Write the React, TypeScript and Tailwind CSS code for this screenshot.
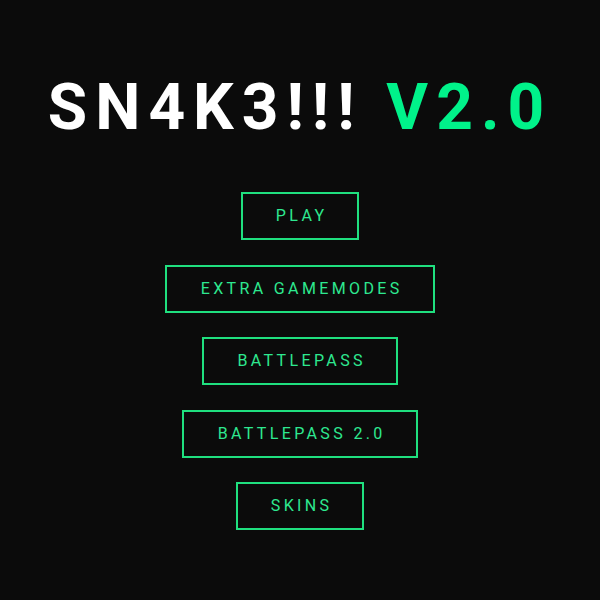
import React from "react";

const items = ["PLAY", "EXTRA GAMEMODES", "BATTLEPASS", "BATTLEPASS 2.0", "SKINS"];

export default function App() {
  return (
    <div className="w-[600px] h-[600px] bg-[#0b0b0b] flex flex-col items-center pt-[76px]" style={{ fontFamily: "Roboto, 'Liberation Sans', sans-serif" }}>
      <h1 className="text-[64px] leading-none font-bold tracking-[0.125em] text-white whitespace-nowrap">
        SN4K3!!! <span className="text-[#00f28a]">V2.0</span>
      </h1>
      <div className="flex flex-col items-center gap-[24.5px] mt-[52px]">
        {items.map((t) => (
          <button key={t} className="h-[48px] px-[30px] border-2 border-[#1fe07f] text-[#2ee890] text-[16px] tracking-[0.21em] leading-none bg-transparent">
            <span className="pl-[0.21em]">{t}</span>
          </button>
        ))}
      </div>
    </div>
  );
}
